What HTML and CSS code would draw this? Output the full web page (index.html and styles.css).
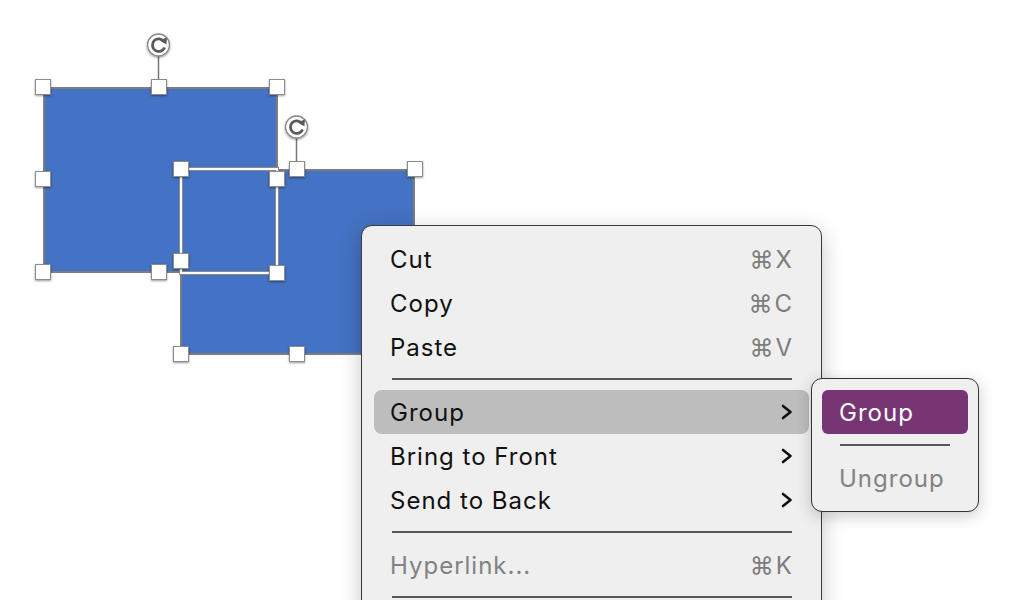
FILE: index.html
```html
<!DOCTYPE html>
<html>
<head>
<meta charset="utf-8">
<link rel="stylesheet" href="styles.css">
</head>
<body>
<div class="stage">
  <svg class="canvas" width="1036" height="600" viewBox="0 0 1036 600">
    <defs>
      <filter id="hs" x="-50%" y="-50%" width="200%" height="200%">
        <feDropShadow dx="0" dy="1" stdDeviation="1.2" flood-color="#000" flood-opacity="0.4"/>
      </filter>
      <g id="rot">
        <circle cx="0" cy="0" r="11" fill="#fff" stroke="#8a8a8a" stroke-width="1.3" filter="url(#hs)"/>
        <path d="M5.6 -3.2 A6.3 6.3 0 1 0 6.1 2.4" fill="none" stroke="#5a5a5a" stroke-width="2.8"/>
        <path d="M1.4 -4.4 L8.4 -7.8 L8 -0.4 Z" fill="#5a5a5a"/>
      </g>
      <rect id="h" x="-7.5" y="-7.5" width="15" height="15" fill="#fff" stroke="#8c8c8c" stroke-width="1" filter="url(#hs)"/>
    </defs>

    <!-- shape 1 -->
    <rect x="44" y="88" width="233" height="184" fill="#4472c4" stroke="#7d7d7d" stroke-width="2"/>
    <!-- shape 2 -->
    <rect x="181" y="170" width="233" height="184" fill="#4472c4" stroke="#7d7d7d" stroke-width="2"/>
    <!-- overlap outline -->
    <rect x="181" y="169" width="96" height="104" fill="none" stroke="#8a8a8a" stroke-width="4"/>
    <rect x="181" y="169" width="96" height="104" fill="none" stroke="#fff" stroke-width="2"/>

    <!-- rotation handles -->
    <line x1="158.5" y1="55" x2="158.5" y2="80" stroke="#777" stroke-width="1.5"/>
    <use href="#rot" x="158.5" y="45"/>
    <line x1="296.5" y1="137" x2="296.5" y2="162" stroke="#777" stroke-width="1.5"/>
    <use href="#rot" x="296.5" y="127"/>

    <!-- handles shape 1 -->
    <use href="#h" x="43" y="87"/>
    <use href="#h" x="159" y="87"/>
    <use href="#h" x="277" y="87"/>
    <use href="#h" x="43" y="179"/>
    <use href="#h" x="43" y="272"/>
    <use href="#h" x="159" y="272"/>
    <!-- handles shape 2 -->
    <use href="#h" x="181" y="169"/>
    <use href="#h" x="297" y="169"/>
    <use href="#h" x="415" y="169"/>
    <use href="#h" x="181" y="354"/>
    <use href="#h" x="297" y="354"/>
    <use href="#h" x="277" y="179"/>
    <use href="#h" x="181" y="261"/>
    <use href="#h" x="277" y="273"/>
  </svg>

  <div class="menu">
    <div class="item"><span class="label">Cut</span><span class="key">⌘X</span></div>
    <div class="item"><span class="label">Copy</span><span class="key">⌘C</span></div>
    <div class="item"><span class="label">Paste</span><span class="key">⌘V</span></div>
    <div class="sep"></div>
    <div class="item active"><span class="label">Group</span>
      <svg class="chev" width="12" height="16" viewBox="0 0 12 16"><polyline points="2,2 9.5,8 2,14" fill="none" stroke="#111" stroke-width="2.6" stroke-linecap="round" stroke-linejoin="round"/></svg>
    </div>
    <div class="item"><span class="label">Bring to Front</span>
      <svg class="chev" width="12" height="16" viewBox="0 0 12 16"><polyline points="2,2 9.5,8 2,14" fill="none" stroke="#111" stroke-width="2.6" stroke-linecap="round" stroke-linejoin="round"/></svg>
    </div>
    <div class="item"><span class="label">Send to Back</span>
      <svg class="chev" width="12" height="16" viewBox="0 0 12 16"><polyline points="2,2 9.5,8 2,14" fill="none" stroke="#111" stroke-width="2.6" stroke-linecap="round" stroke-linejoin="round"/></svg>
    </div>
    <div class="sep"></div>
    <div class="item disabled"><span class="label">Hyperlink...</span><span class="key">⌘K</span></div>
    <div class="sep"></div>
    <div class="spacer"></div>
  </div>

  <div class="submenu">
    <div class="sitem selected">Group</div>
    <div class="ssep"></div>
    <div class="sitem disabled">Ungroup</div>
  </div>
</div>
</body>
</html>
```

FILE: styles.css
```css
html, body {
  margin: 0;
  padding: 0;
  background: #ffffff;
}
.stage {
  position: relative;
  width: 1036px;
  height: 600px;
  overflow: hidden;
  font-family: Inter, "Noto Sans", "Liberation Sans", sans-serif;
}
.canvas {
  display: block;
}
.menu {
  position: absolute;
  left: 361px;
  top: 225px;
  width: 435px;
  padding: 11px 12px;
  background: #efefef;
  border: 1.5px solid #3a3a3a;
  border-radius: 11px;
  box-shadow: 0 6px 22px rgba(0, 0, 0, 0.22);
}
.item {
  height: 44px;
  display: flex;
  align-items: center;
  justify-content: space-between;
  padding: 0 17px 0 16px;
  border-radius: 8px;
  font-size: 24px;
  color: #111;
  letter-spacing: 1px;
}
.item.active {
  background: #bdbdbd;
}
.item.disabled .label {
  color: #828282;
}
.key {
  color: #7d7d7d;
  letter-spacing: 2px;
  margin-right: -2px;
}
.chev {
  display: block;
  margin-right: -1px;
}
.sep {
  height: 2px;
  background: #565656;
  margin: 9px 17px 10px 18px;
}
.spacer {
  height: 44px;
}
.submenu {
  position: absolute;
  left: 811px;
  top: 378px;
  width: 146px;
  padding: 11px 10px;
  background: #efefef;
  border: 1.5px solid #333;
  border-radius: 11px;
  box-shadow: 0 4px 16px rgba(0, 0, 0, 0.2);
}
.sitem {
  height: 44px;
  display: flex;
  align-items: center;
  padding-left: 17px;
  border-radius: 6px;
  font-size: 24px;
  color: #111;
  letter-spacing: 1px;
}
.sitem.selected {
  background: #773673;
  color: #fff;
}
.sitem.disabled {
  color: #828282;
}
.ssep {
  height: 2px;
  background: #565656;
  margin: 10px 18px 10px 18px;
}
```
